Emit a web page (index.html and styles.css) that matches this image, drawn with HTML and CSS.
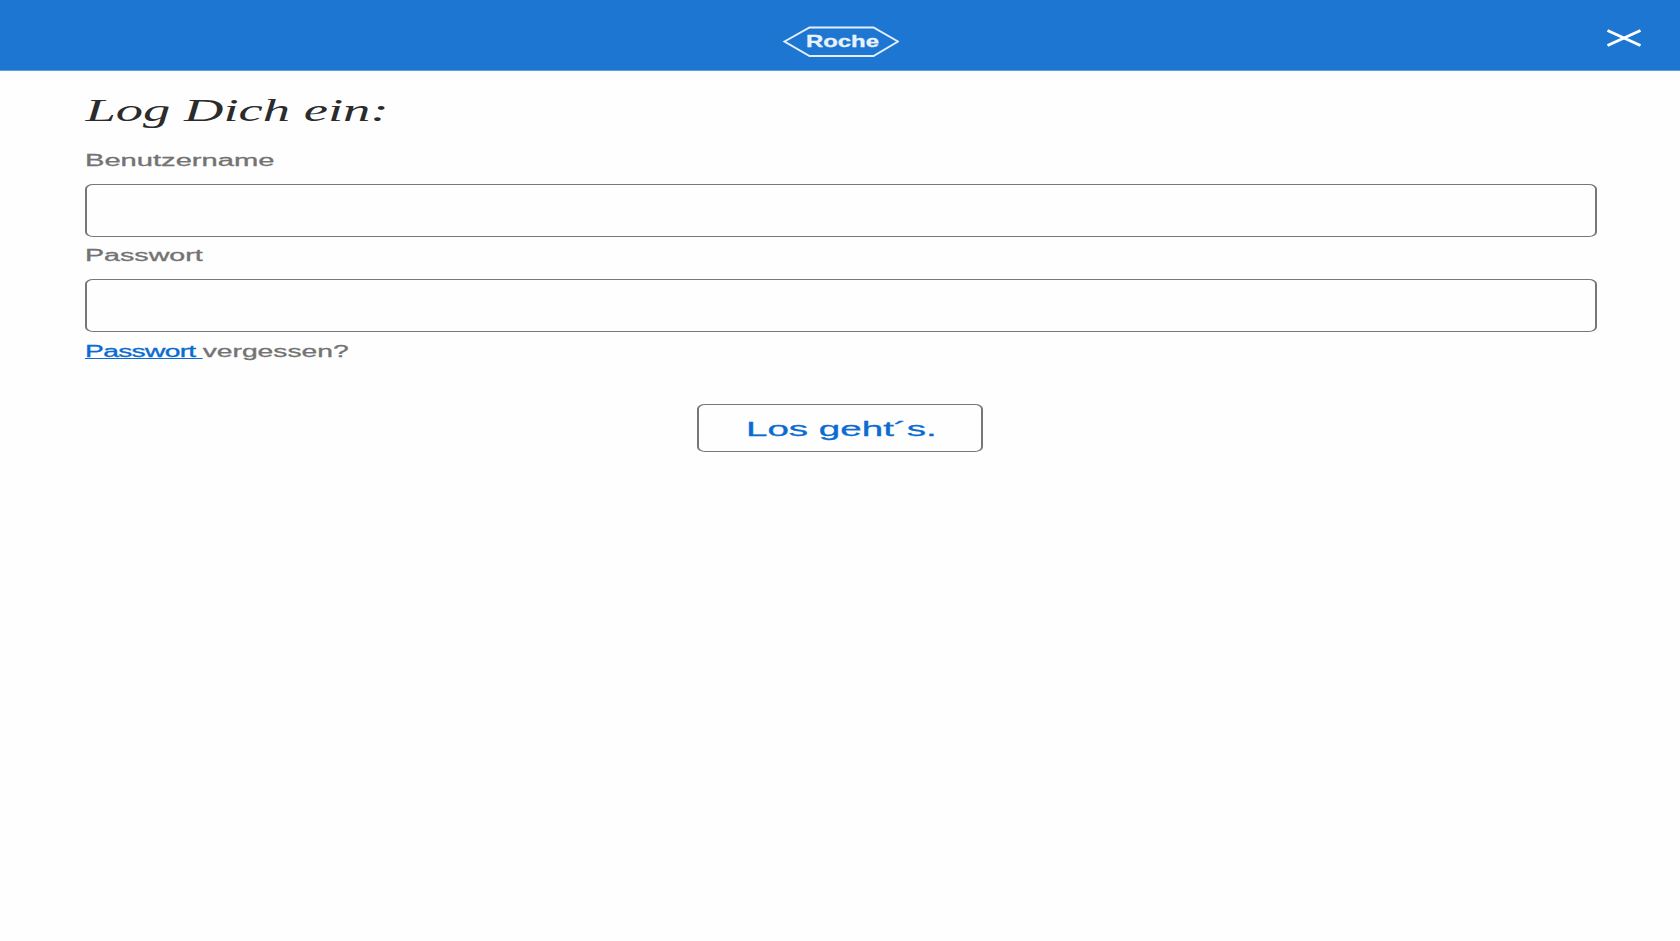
FILE: index.html
```
<!DOCTYPE html>
<html lang="de">
<head>
<meta charset="utf-8">
<title>Roche Login</title>
<link rel="stylesheet" href="styles.css">
</head>
<body>
<header class="bar">
  <span></span>
  <svg class="logo" viewBox="0 0 118 32" role="img" aria-label="Roche">
    <path class="logo-frame" d="M3.5 15.5 28.5 1.5H92.5L117 15.5 92.5 30H28.5Z"/>
    <text class="logo-text" x="25" y="20.7" textLength="73" lengthAdjust="spacingAndGlyphs">Roche</text>
  </svg>
  <svg class="close" viewBox="0 0 36 18" role="img" aria-label="Schließen"><path d="M1.5 1.5 34.5 16.5M34.5 1.5 1.5 16.5"/></svg>
</header>
<main class="content">
  <form class="login">
    <h1 class="title"><span class="wide wide-title">Log Dich ein:</span></h1>
    <label class="label" for="user"><span class="wide wide-user">Benutzername</span></label>
    <input class="field" id="user" type="text">
    <label class="label" for="pass"><span class="wide wide-pass">Passwort</span></label>
    <input class="field" id="pass" type="password">
    <p class="label forgot"><span class="wide wide-forgot"><a class="link" href="#">Passwort </a>vergessen?</span></p>
    <button class="submit" type="button"><span class="wide wide-submit">Los geht´s.</span></button>
  </form>
</main>
</body>
</html>
```
FILE: styles.css
```
* { box-sizing: border-box; }
body {
  margin: 0;
  background: #fefefe;
  color: #737373;
  font-family: "Liberation Sans", Arial, sans-serif;
}
.bar {
  display: grid;
  grid-template-columns: 1fr 118px 1fr;
  align-items: start;
  height: 71px;
  padding-right: 38px;
  padding-left: 37px;
  background: #1c76d2;
  border-bottom: 1px solid #5d9fe0;
}
.logo {
  width: 118px;
  height: 32px;
  margin-top: 26px;
}
.logo-frame { fill: none; stroke: #e4effa; stroke-width: 2; }
.logo-text {
  fill: #e8f2fc;
  font-size: 16.3px;
  font-weight: 700;
  stroke: #e8f2fc;
  stroke-width: 0.3;
}
.close {
  justify-self: end;
  width: 36px;
  height: 18px;
  margin-top: 29px;
}
.close path { fill: none; stroke: #fff; stroke-width: 3; }
.content { padding: 0 83px 0 85px; }
.login { display: flex; flex-direction: column; }
.wide {
  display: inline-block;
  white-space: pre;
  transform-origin: 0 50%;
}
.title {
  height: 77px;
  margin: 0;
  padding-top: 21px;
  color: #2b2b2b;
  font: italic 400 31px/38px "Liberation Serif", "Times New Roman", serif;
}
.wide-title { transform: translateX(0.5px) scaleX(1.76); }
.label {
  height: 36px;
  margin: 0;
  font-size: 16px;
  line-height: 26px;
  -webkit-text-stroke: 0.3px;
}
.forgot { padding-top: 1px; }
.wide-user { transform: scaleX(1.82); }
.wide-pass { transform: scaleX(1.79); }
.wide-forgot { transform: scaleX(1.765); }
.field {
  width: 100%;
  height: 53px;
  margin: 0 0 6px;
  padding: 0 20px;
  border: solid #777;
  border-width: 1px 2px;
  border-radius: 8px / 5px;
  background: transparent;
  font-size: 16px;
  outline: none;
}
.link {
  color: #0b6bd0;
  letter-spacing: -0.4px;
  text-decoration: underline;
  text-decoration-thickness: 1px;
  text-underline-offset: 1px;
}
.submit {
  align-self: center;
  width: 286px;
  height: 48px;
  margin: 30px 2px 0 0;
  padding: 1px 0 0 47px;
  border: solid #777;
  border-width: 1px 2px;
  border-radius: 8px / 5px;
  background: transparent;
  color: #0b6bd0;
  font: 20.5px/46px "Liberation Sans", Arial, sans-serif;
  text-align: left;
  -webkit-text-stroke: 0.3px;
}
.wide-submit { transform: scaleX(1.88); }
```
